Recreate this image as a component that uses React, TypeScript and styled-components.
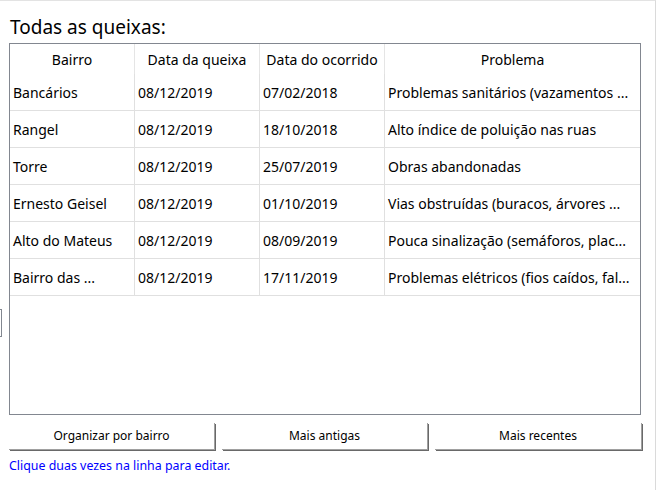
import React from "react";
import styled, { createGlobalStyle } from "styled-components";

const Global = createGlobalStyle`
  html, body { margin: 0; padding: 0; background: #ffffff; }
  body { font-family: "Noto Sans", "Open Sans", sans-serif; color: #000; }
  * { box-sizing: border-box; }
`;

const Frame = styled.div`
  width: 656px;
  height: 490px;
  border-top: 1px solid #e3e3e3;
  border-right: 1px solid #dadada;
  position: relative;
  padding: 11px 0 0 9px;
  display: flex;
  flex-direction: column;
`;

const Title = styled.h1`
  margin: 0;
  font-family: "Noto Sans", sans-serif;
  font-weight: 400;
  font-size: 19px;
  line-height: 31px;
  height: 31px;
  padding-left: 1px;
`;

const ListBox = styled.div`
  width: 632px;
  height: 372px;
  border: 1px solid #828790;
  background: #fff;
  overflow: hidden;
`;

const Table = styled.div`
  display: grid;
  grid-template-columns: 125px 125px 125px 255px;
  width: 630px;
`;

const HeadCell = styled.div`
  height: 30px;
  padding-top: 6px;
  text-align: center;
  font-size: 14px;
  line-height: 20px;
  border-right: 1px solid #e5e5e5;
  white-space: nowrap;
  overflow: hidden;
  &:nth-child(4n) { border-right: none; }
`;

const Cell = styled.div<{ $last?: boolean }>`
  height: 37px;
  padding: 9px 0 0 3px;
  font-size: 14px;
  line-height: 20px;
  border-bottom: 1px solid #e0e0e0;
  border-right: ${(p) => (p.$last ? "none" : "1px solid #e0e0e0")};
  white-space: nowrap;
  overflow: hidden;
  text-overflow: ellipsis;
`;

const ButtonRow = styled.div`
  display: grid;
  grid-template-columns: 206px 206px 207px;
  column-gap: 7px;
  width: 633px;
  margin-top: 8px;
`;

const Button = styled.button`
  height: 27px;
  background: #ffffff;
  border: none;
  border-right: 1px solid #a0a0a0;
  border-bottom: 1px solid #a0a0a0;
  box-shadow: 1px 1px 0 #696969;
  font-family: "Noto Sans", sans-serif;
  font-size: 12px;
  color: #000;
  padding: 0 0 1px 0;
  text-align: center;
`;

const Hint = styled.div`
  margin-top: 8px;
  color: #0000ff;
  font-family: "Noto Sans", sans-serif;
  font-size: 12.4px;
  line-height: 16px;
`;

const EdgeBox = styled.div`
  position: absolute;
  left: -10px;
  top: 308px;
  width: 12px;
  height: 28px;
  border: 1px solid #828790;
`;

const rows = [
  ["Bancários", "08/12/2019", "07/02/2018", "Problemas sanitários (vazamentos ..."],
  ["Rangel", "08/12/2019", "18/10/2018", "Alto índice de poluição nas ruas"],
  ["Torre", "08/12/2019", "25/07/2019", "Obras abandonadas"],
  ["Ernesto Geisel", "08/12/2019", "01/10/2019", "Vias obstruídas (buracos, árvores ..."],
  ["Alto do Mateus", "08/12/2019", "08/09/2019", "Pouca sinalização (semáforos, plac..."],
  ["Bairro das ...", "08/12/2019", "17/11/2019", "Problemas elétricos (fios caídos, fal..."],
];

const headers = ["Bairro", "Data da queixa", "Data do ocorrido", "Problema"];

export default function App() {
  return (
    <>
      <Global />
      <Frame>
        <EdgeBox />
        <Title>Todas as queixas:</Title>
        <ListBox>
          <Table>
            {headers.map((h) => (
              <HeadCell key={h}>{h}</HeadCell>
            ))}
            {rows.map((r, i) =>
              r.map((c, j) => (
                <Cell key={`${i}-${j}`} $last={j === 3}>
                  {c}
                </Cell>
              ))
            )}
          </Table>
        </ListBox>
        <ButtonRow>
          <Button>Organizar por bairro</Button>
          <Button>Mais antigas</Button>
          <Button>Mais recentes</Button>
        </ButtonRow>
        <Hint>Clique duas vezes na linha para editar.</Hint>
      </Frame>
    </>
  );
}
